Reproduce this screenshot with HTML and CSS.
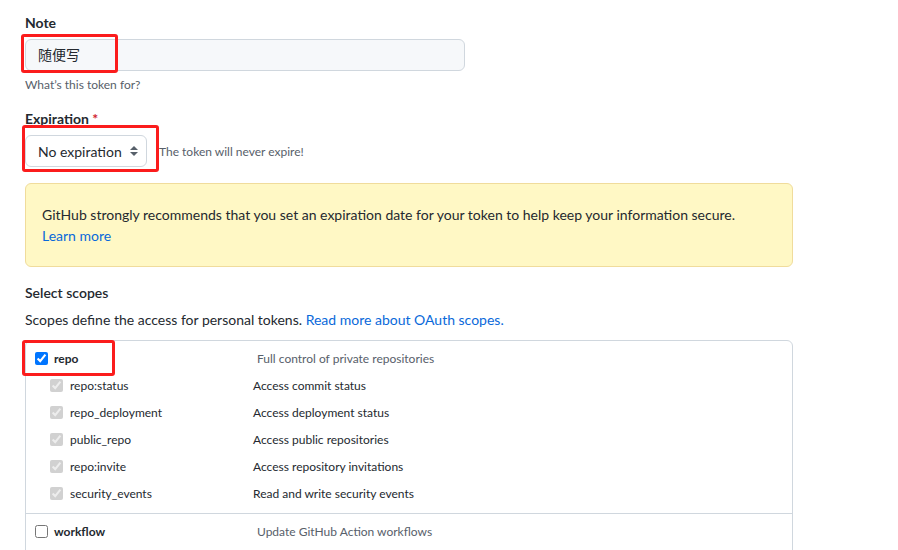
FILE: index.html
```html
<!DOCTYPE html>
<html>
<head>
<meta charset="utf-8">
<link rel="stylesheet" href="styles.css">
</head>
<body>
<div class="page">
  <div class="field">
    <div class="label">Note</div>
    <div class="anchor">
      <div class="input">随便写</div>
      <div class="mark mark-note"></div>
    </div>
    <div class="hint">What’s this token for?</div>
  </div>

  <div class="field field-exp">
    <div class="label">Expiration <span class="req">*</span></div>
    <div class="exp-row">
      <div class="anchor">
        <div class="select">No expiration
          <svg class="caret" width="8" height="10" viewBox="0 0 8 10"><path d="M4 0 L8 4 H0 Z M0 6 H8 L4 10 Z" fill="#57606a"/></svg>
        </div>
        <div class="mark mark-exp"></div>
      </div>
      <span class="exp-note">The token will never expire!</span>
    </div>
  </div>

  <div class="flash">
    GitHub strongly recommends that you set an expiration date for your token to help keep your information secure.<br>
    <a class="link" href="#">Learn more</a>
  </div>

  <div class="scopes-title">Select scopes</div>
  <div class="scopes-desc">Scopes define the access for personal tokens. <a class="link" href="#">Read more about OAuth scopes.</a></div>

  <div class="scope-box">
    <div class="group">
      <div class="row top">
        <label class="name"><input type="checkbox" checked><span>repo</span></label>
        <span class="desc">Full control of private repositories</span>
      </div>
      <div class="row sub">
        <label class="name"><input type="checkbox" checked disabled><span>repo:status</span></label>
        <span class="desc">Access commit status</span>
      </div>
      <div class="row sub">
        <label class="name"><input type="checkbox" checked disabled><span>repo_deployment</span></label>
        <span class="desc">Access deployment status</span>
      </div>
      <div class="row sub">
        <label class="name"><input type="checkbox" checked disabled><span>public_repo</span></label>
        <span class="desc">Access public repositories</span>
      </div>
      <div class="row sub">
        <label class="name"><input type="checkbox" checked disabled><span>repo:invite</span></label>
        <span class="desc">Access repository invitations</span>
      </div>
      <div class="row sub">
        <label class="name"><input type="checkbox" checked disabled><span>security_events</span></label>
        <span class="desc">Read and write security events</span>
      </div>
      <div class="mark mark-repo"></div>
    </div>
    <div class="group group-last">
      <div class="row top">
        <label class="name"><input type="checkbox"><span>workflow</span></label>
        <span class="desc">Update GitHub Action workflows</span>
      </div>
    </div>
  </div>
</div>
</body>
</html>
```

FILE: styles.css
```css
html, body {
  margin: 0;
  padding: 0;
  background: #ffffff;
}
body {
  font-family: Lato, "Noto Sans CJK SC", sans-serif;
  font-size: 14px;
  line-height: 21px;
  color: #24292f;
  overflow: hidden;
  height: 550px;
}
.page {
  width: 768px;
  padding: 12px 0 0 25px;
}
.label {
  font-weight: 700;
  margin-bottom: 6px;
}
.req { color: #cf222e; }
.anchor {
  position: relative;
  display: inline-block;
  vertical-align: top;
}
.input {
  width: 440px;
  height: 32px;
  box-sizing: border-box;
  border: 1px solid #d0d7de;
  border-radius: 6px;
  background: #f6f8fa;
  padding: 0 12px;
  line-height: 28px;
  font-family: "Noto Sans CJK SC", sans-serif;
}
.hint {
  font-size: 12px;
  line-height: 18px;
  color: #57606a;
  margin-top: 5px;
}
.field-exp { margin-top: 14px; }
.exp-row {
  display: flex;
  align-items: center;
  gap: 12px;
}
.select {
  height: 32px;
  width: 122px;
  box-sizing: border-box;
  border: 1px solid #d0d7de;
  border-radius: 6px;
  background: #ffffff;
  padding: 0 8px 0 12px;
  display: flex;
  align-items: center;
  justify-content: space-between;
}
.caret { display: block; }
.exp-note {
  font-size: 12px;
  color: #57606a;
}
.mark {
  position: absolute;
  border: 3px solid #fb1c1c;
  border-radius: 3px;
  box-sizing: border-box;
}
.mark-note { left: -4px; top: -5px; width: 97px; height: 39px; }
.mark-exp { left: -3px; top: -10px; width: 137px; height: 47px; }
.mark-repo { left: -4px; top: -1px; width: 93px; height: 36px; }

.flash {
  margin-top: 16px;
  border: 1px solid #f0dc9c;
  background: #fff8c5;
  border-radius: 6px;
  padding: 20px 16px;
}
.link {
  color: #0969da;
  text-decoration: none;
}
.scopes-title {
  margin-top: 15px;
  font-weight: 600;
}
.scopes-desc { margin-top: 6px; }
.scope-box {
  margin-top: 10px;
  border: 1px solid #d0d7de;
  border-radius: 6px;
}
.group {
  position: relative;
  padding: 4px 0 6px;
}
.group + .group { border-top: 1px solid #d0d7de; }
.group-last { padding-bottom: 40px; }
.row {
  display: flex;
  align-items: center;
  height: 27px;
  font-size: 12px;
}
.row.top { padding-left: 9px; }
.row.sub { padding-left: 24px; }
.name {
  display: flex;
  align-items: center;
}
.row.top .name { width: 222px; gap: 6px; font-weight: 700; }
.row.sub .name { width: 203px; gap: 7px; }
.name input {
  margin: 0;
  width: 13px;
  height: 13px;
}
.desc { color: #57606a; }
.row.sub .desc { color: #24292f; }
```
